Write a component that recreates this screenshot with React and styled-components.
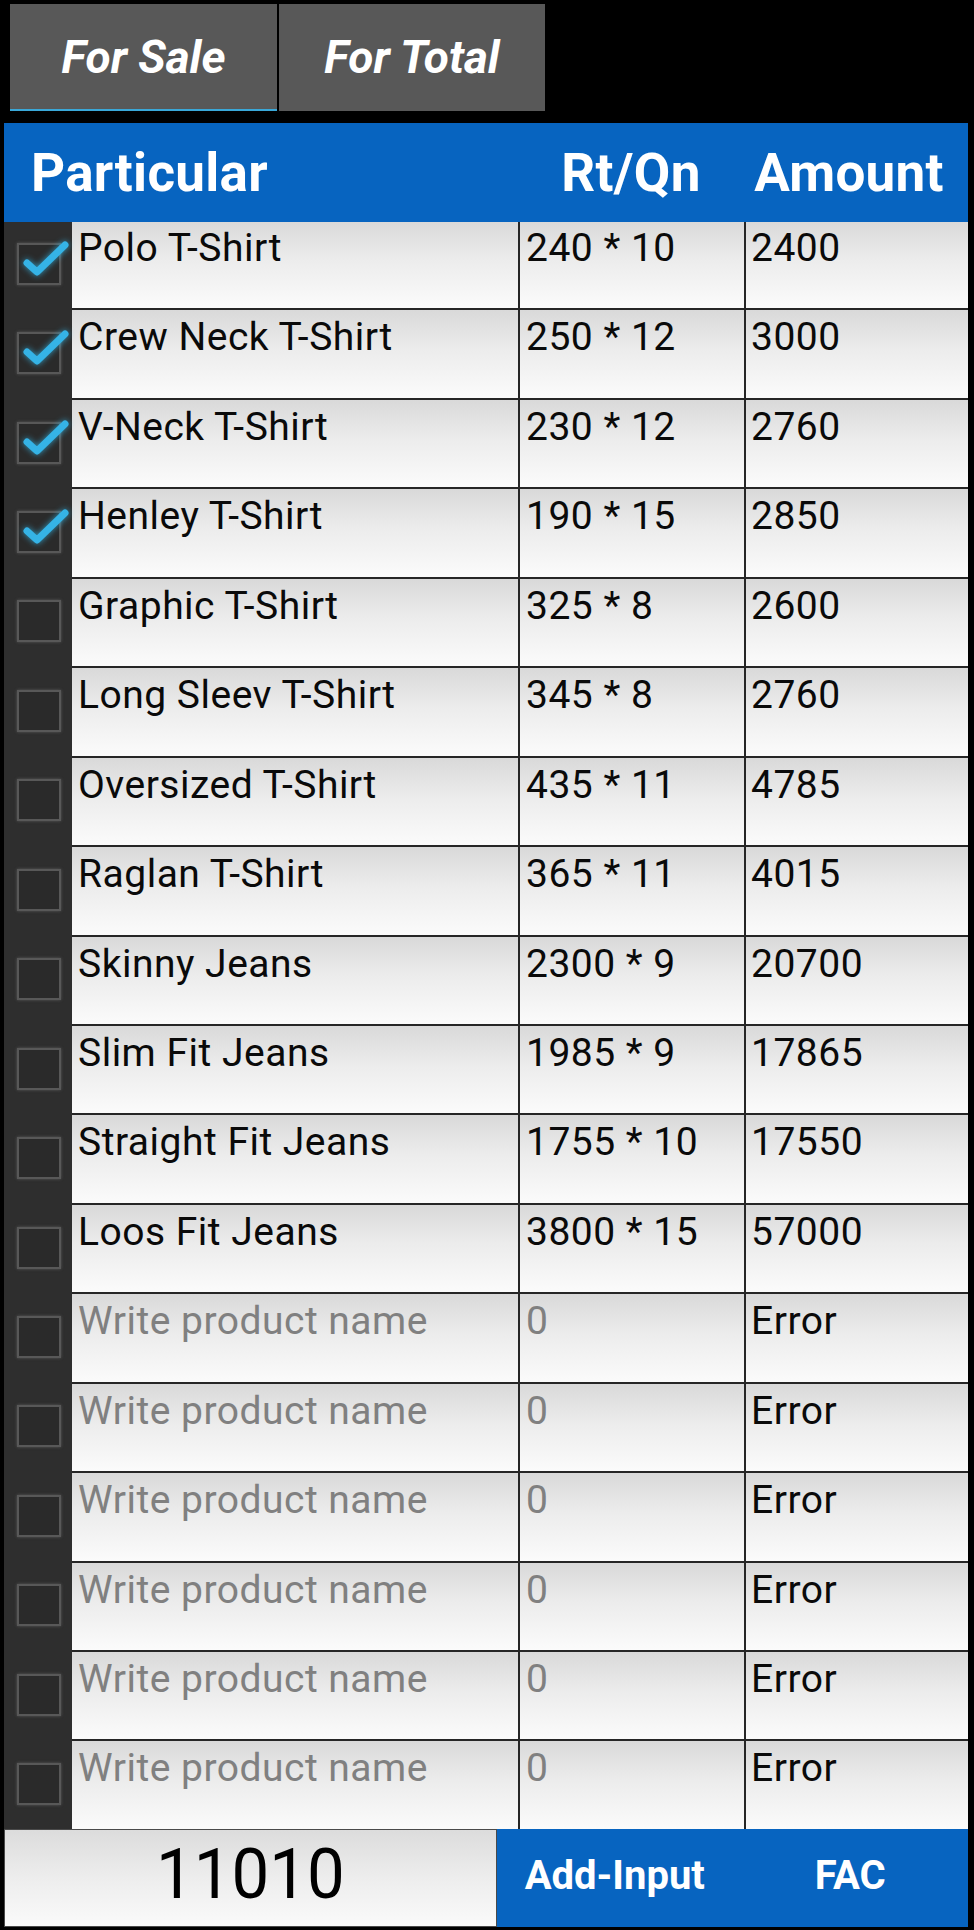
import React from "react";
import styled, { createGlobalStyle } from "styled-components";

const GlobalStyle = createGlobalStyle`
  html, body { margin: 0; padding: 0; background: #000; }
  body { font-family: Roboto, "Noto Sans", "Liberation Sans", sans-serif; }
  * { box-sizing: border-box; }
`;

const BLUE = "#0764c0";
const COLS = "68px 446px 226px 224px";

const Page = styled.div`
  width: 974px;
  padding: 4px 6px 3px 4px;
  display: flex;
  flex-direction: column;
  background: #000;
`;

const TabBar = styled.div`
  display: flex;
  gap: 2px;
  margin-left: 6px;
  margin-bottom: 12px;
`;

const Tab = styled.div`
  width: ${(p) => p.$w}px;
  height: 107px;
  background: #585858;
  color: #fff;
  font-weight: 700;
  font-style: italic;
  font-size: 46px;
  display: flex;
  align-items: center;
  justify-content: center;
  border-bottom: 2px solid ${(p) => (p.$active ? "#3aa8d8" : "#585858")};
`;

const Header = styled.div`
  position: relative;
  z-index: 1;
  height: 99px;
  background: ${BLUE};
  display: grid;
  grid-template-columns: ${COLS};
  align-items: center;
  color: #fff;
  font-weight: 700;
  font-size: 53px;
  letter-spacing: 0.3px;
`;

const HeadCell = styled.div`
  grid-column: ${(p) => p.$span || "auto"};
  text-align: ${(p) => p.$align || "center"};
  padding-left: ${(p) => p.$pl || 0}px;
  padding-right: ${(p) => p.$pr || 0}px;
  white-space: nowrap;
`;

const List = styled.div`
  margin-top: -3px;
  display: flex;
  flex-direction: column;
`;

const Row = styled.div`
  display: grid;
  grid-template-columns: ${COLS};
  height: 89.45px;
`;

const CheckCell = styled.div`
  background: #2e2e2e;
  display: flex;
  align-items: center;
  justify-content: center;
`;

const Cell = styled.div`
  background: linear-gradient(to bottom, #d9d9d9 0%, #ececec 45%, #fbfbfb 100%);
  border-top: 2px solid #262626;
  border-left: ${(p) => (p.$divider ? "2px solid #262626" : "none")};
  padding: 4px 6px 0 ${(p) => p.$pl || 6}px;
  font-size: 39px;
  letter-spacing: 0.5px;
  color: ${(p) => (p.$muted ? "#808080" : "#0a0a0a")};
  white-space: nowrap;
  overflow: hidden;
`;

const Box = styled.span`
  position: relative;
  width: 44px;
  height: 42px;
  border: 2px solid #585858;
  background: #2a2a2a;
  box-shadow: 0 0 3px rgba(140, 140, 140, 0.45);
  margin-left: 2px;
`;

const Tick = styled.svg`
  position: absolute;
  left: -2px;
  top: -2px;
  overflow: visible;
  filter: drop-shadow(0 0 3px rgba(51, 181, 229, 0.8));
`;

const Footer = styled.div`
  display: grid;
  grid-template-columns: 493px 471px;
  height: 98px;
`;

const TotalBox = styled.div`
  border: 1px solid #4a4a4a;
  background: linear-gradient(to bottom, #dcdcdc 0%, #ededed 50%, #fafafa 100%);
  display: flex;
  align-items: center;
  justify-content: center;
  padding-bottom: 8px;
`;

const TotalText = styled.span`
  display: inline-block;
  font-size: 70px;
  color: #000;
  transform: scaleX(0.96);
`;

const ActionBar = styled.div`
  background: ${BLUE};
  display: flex;
`;

const Action = styled.div`
  flex: 1;
  display: flex;
  align-items: center;
  justify-content: center;
  color: #fff;
  font-weight: 700;
  font-size: 40px;
  padding-bottom: 4px;
`;

const Checkbox = ({ checked }) => (
  <Box>
    {checked && (
      <Tick width="44" height="42" viewBox="0 0 44 42">
        <path
          d="M10 20 L20 29 L48 2"
          fill="none"
          stroke="#35b3e6"
          strokeWidth="7"
          strokeLinecap="round"
          strokeLinejoin="round"
        />
      </Tick>
    )}
  </Box>
);

const items = [
  ["Polo T-Shirt", 240, 10, true],
  ["Crew Neck T-Shirt", 250, 12, true],
  ["V-Neck T-Shirt", 230, 12, true],
  ["Henley T-Shirt", 190, 15, true],
  ["Graphic T-Shirt", 325, 8, false],
  ["Long Sleev T-Shirt", 345, 8, false],
  ["Oversized T-Shirt", 435, 11, false],
  ["Raglan T-Shirt", 365, 11, false],
  ["Skinny Jeans", 2300, 9, false],
  ["Slim Fit Jeans", 1985, 9, false],
  ["Straight Fit Jeans", 1755, 10, false],
  ["Loos Fit Jeans", 3800, 15, false],
];

export default function App() {
  const total = items.filter((i) => i[3]).reduce((s, i) => s + i[1] * i[2], 0);
  return (
    <>
      <GlobalStyle />
      <Page>
        <TabBar>
          <Tab $w={267} $active>For Sale</Tab>
          <Tab $w={266}>For Total</Tab>
        </TabBar>
        <Header>
          <HeadCell $span="1 / 3" $align="left" $pl={27}>Particular</HeadCell>
          <HeadCell>Rt/Qn</HeadCell>
          <HeadCell $pr={14}>Amount</HeadCell>
        </Header>
        <List>
          {items.map(([name, rate, qty, checked]) => (
            <Row key={name}>
              <CheckCell>
                <Checkbox checked={checked} />
              </CheckCell>
              <Cell>{name}</Cell>
              <Cell $divider>{`${rate} * ${qty}`}</Cell>
              <Cell $divider $pl={5}>{rate * qty}</Cell>
            </Row>
          ))}
          {Array.from({ length: 6 }).map((_, i) => (
            <Row key={`empty-${i}`}>
              <CheckCell>
                <Checkbox checked={false} />
              </CheckCell>
              <Cell $muted>Write product name</Cell>
              <Cell $divider $muted>0</Cell>
              <Cell $divider $pl={5}>Error</Cell>
            </Row>
          ))}
        </List>
        <Footer>
          <TotalBox>
            <TotalText>{total}</TotalText>
          </TotalBox>
          <ActionBar>
            <Action>Add-Input</Action>
            <Action>FAC</Action>
          </ActionBar>
        </Footer>
      </Page>
    </>
  );
}
